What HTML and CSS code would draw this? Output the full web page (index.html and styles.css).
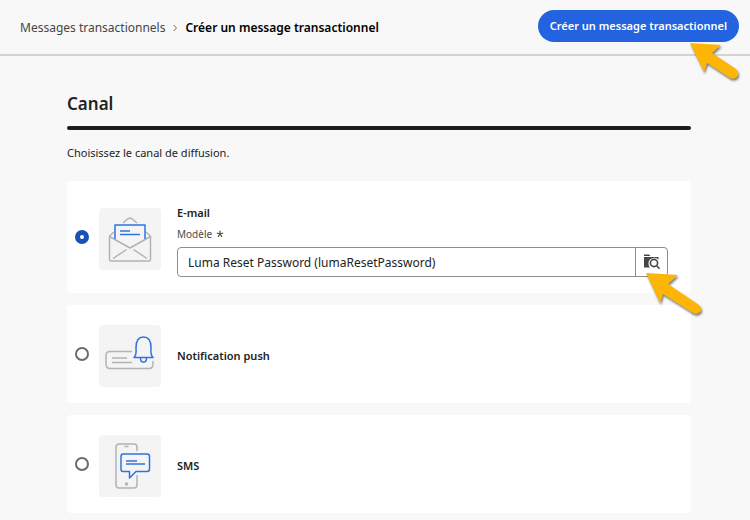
FILE: index.html
```html
<!DOCTYPE html>
<html lang="fr">
<head>
    <meta charset="UTF-8">
    <meta name="viewport" content="width=device-width, initial-scale=1.0">
    <title>Créer un message transactionnel</title>
    <link rel="stylesheet" href="styles.css">
</head>
<body>

<header class="topbar">
    <nav class="breadcrumb">
        <a href="#">Messages transactionnels</a>
        <svg class="chevron" viewBox="0 0 6 8" width="6" height="8"><path d="M1.5 1 L4.5 4 L1.5 7"/></svg>
        <span class="current">Créer un message transactionnel</span>
    </nav>
    <div class="create">
        <button type="button" class="create-button">Créer un message transactionnel</button>
        <svg class="arrow arrow-create" viewBox="0 0 60 48" width="60" height="48">
            <path d="M1 1 L32 3 L23 11 L47 27 Q51 31 48 35 Q45 38 41 36 L18 21 L15 30 Z"/>
        </svg>
    </div>
</header>

<main class="content">
    <h1>Canal</h1>
    <div class="rule"></div>
    <p class="intro">Choisissez le canal de diffusion.</p>

    <form class="channels">
        <div class="channel">
            <input type="radio" id="email" name="canal" checked>
            <div class="picture">
                <svg viewBox="0 0 62 62" width="62" height="62">
                    <g class="grey">
                        <path d="M24 15 L28 11.5 Q31 9 34 11.5 L38 15"/>
                        <path d="M15 24 L10.5 28 V51.5 Q10.5 53 12 53 H50 Q51.500 53 51.500 51.500 V28 L47 24"/>
                        <path d="M10.500 28.500 L31 40 L51.500 28.500 M14 50.500 L27.500 41.500 M48 50.500 L34.500 41.500"/>
                    </g>
                    <g class="blue">
                        <path d="M16 31 V17 H46 V31"/>
                        <path d="M21 23 H31 M21 26.500 H41"/>
                    </g>
                </svg>
            </div>
            <div class="details">
                <label class="name" for="email">E-mail</label>
                <label class="field-label" for="modele">Modèle
                    <svg class="required" viewBox="0 0 8 8" width="8" height="8"><path d="M4 4 V0.800 M4 4 L7.200 3 M4 4 L6 6.900 M4 4 L2 6.900 M4 4 L0.800 3"/></svg>
                </label>
                <div class="picker">
                    <input type="text" id="modele" value="Luma Reset Password (lumaResetPassword)">
                    <button type="button" class="browse" aria-label="Parcourir">
                        <svg viewBox="0 0 18 18" width="18" height="18">
                            <path class="folder" d="M1 1.500 H6 L7.500 3 H1 Z M1 4 H15.500 V6.500 A5.500 5.500 0 0 0 7 14.500 H1 Z"/>
                            <circle class="lens" cx="11" cy="10" r="3.600"/>
                            <path class="lens" d="M13.700 12.700 L16.500 15.800"/>
                        </svg>
                    </button>
                    <svg class="arrow arrow-browse" viewBox="0 0 66 52" width="66" height="52">
                        <path d="M1 1 L33 3 L23 12 L54 33 Q58 37 55 40 Q52 43 48 41 L18 22 L15 31 Z"/>
                    </svg>
                </div>
            </div>
        </div>

        <div class="channel">
            <input type="radio" id="push" name="canal">
            <div class="picture">
                <svg viewBox="0 0 62 62" width="62" height="62">
                    <g class="grey">
                        <path d="M33 26.500 H11 Q7 26.500 7 30.500 V39 Q7 43.500 11 43.500 H50 Q54 43.500 54 39 V36"/>
                        <path d="M13 33 H28 M13 37.500 H33"/>
                    </g>
                    <g class="blue">
                        <path d="M35 32.500 C38 29.500 37 26 37 22.500 C37 16 39 12 44.500 12 C50 12 52 16 52 22.500 C52 26 51 29.500 54 32.500 Z"/>
                        <path d="M41.500 33 C41.500 38.500 47.500 38.500 47.500 33"/>
                    </g>
                </svg>
            </div>
            <div class="details">
                <label class="name" for="push">Notification push</label>
            </div>
        </div>

        <div class="channel">
            <input type="radio" id="sms" name="canal">
            <div class="picture">
                <svg viewBox="0 0 62 62" width="62" height="62">
                    <g class="grey">
                        <path d="M38 16 V12 Q38 9 35 9 H20 Q17 9 17 12 V50 Q17 53 20 53 H35 Q38 53 38 50 V40"/>
                        <path d="M25.500 11.500 H29.500"/>
                        <circle cx="27.500" cy="49" r="1"/>
                    </g>
                    <g class="blue">
                        <path d="M24 19 H48 Q50.500 19 50.500 21.500 V34 Q50.500 36.500 48 36.500 H37 L30.500 43 V36.500 H24 Q22 36.500 22 34 V21.500 Q22 19 24 19 Z"/>
                        <path d="M27 26 H38 M27 29 H46"/>
                    </g>
                </svg>
            </div>
            <div class="details">
                <label class="name" for="sms">SMS</label>
            </div>
        </div>
    </form>
</main>

</body>
</html>
```
FILE: styles.css
```css
* {
    box-sizing: border-box;
}
body {
    font-family: "Noto Sans", sans-serif;
    font-size: 12px;
    background-color: #f8f8f8;
    color: #222;
    margin: 0;
}
.topbar {
    display: flex;
    justify-content: space-between;
    align-items: center;
    padding: 10px 11px 12px 20px;
    border-bottom: 2px solid #d3d3d3;
}
.breadcrumb {
    display: flex;
    align-items: center;
    gap: 7px;
    padding-top: 3px;
    line-height: 20px;
}
.breadcrumb a {
    color: #464646;
    text-decoration: none;
}
.chevron {
    fill: none;
    stroke: #6e6e6e;
}
.current {
    color: #000;
    font-weight: 600;
}
.create {
    position: relative;
}
.create-button {
    display: block;
    height: 32px;
    padding: 0 12px 2px;
    border: none;
    border-radius: 16px;
    background-color: #2363df;
    color: white;
    font-family: inherit;
    font-size: 11px;
    font-weight: 600;
    cursor: pointer;
}
.arrow {
    position: absolute;
    z-index: 1;
    fill: #fdb508;
    filter: drop-shadow(1px 2px 1px rgba(0, 0, 0, 0.5));
    pointer-events: none;
}
.arrow-create {
    top: 32px;
    right: -10px;
}
.arrow-browse {
    top: 24px;
    right: -44px;
}
.content {
    padding: 36px 59px 7px 67px;
}
h1 {
    margin: 0;
    font-size: 17px;
    font-weight: 600;
    line-height: 24px;
}
.rule {
    height: 4px;
    margin-top: 10px;
    border-radius: 2px;
    background-color: #1d1d1d;
}
.intro {
    margin: 13px 0 18px;
    font-size: 11px;
    line-height: 20px;
}
.channels {
    display: flex;
    flex-direction: column;
    gap: 12px;
}
.channel {
    display: flex;
    align-items: center;
    padding: 20px 23px 16px 8px;
    border-radius: 4px;
    background-color: white;
}
.channel input[type="radio"] {
    appearance: none;
    width: 14px;
    height: 14px;
    margin: 0 10px 5px 0;
    border: 2px solid #6b6b6b;
    border-radius: 50%;
    background-color: white;
}
.channel input[type="radio"]:checked {
    border: 5px solid #1b50b8;
}
.picture {
    width: 62px;
    height: 62px;
    margin-right: 16px;
    border-radius: 4px;
    background-color: #f4f4f4;
}
.picture svg {
    display: block;
    fill: none;
    stroke-width: 1.5;
    stroke-linejoin: round;
}
.grey {
    stroke: #b3b3b3;
}
.blue {
    stroke: #2c74dd;
}
.details {
    flex: 1;
}
.name {
    display: block;
    font-size: 11px;
    font-weight: 600;
    line-height: 24px;
}
.field-label {
    display: flex;
    align-items: center;
    gap: 4px;
    margin-bottom: 4px;
    color: #4b4b4b;
    font-size: 10px;
    line-height: 18px;
}
.required {
    stroke: #4b4b4b;
    stroke-width: 1.2;
}
.picker {
    position: relative;
    display: flex;
    height: 30px;
    border: 1px solid #8e8e8e;
    border-radius: 4px;
    background-color: white;
}
.picker input {
    flex: 1;
    min-width: 0;
    padding: 0 10px;
    border: none;
    background: none;
    color: #222;
    font-family: inherit;
    font-size: 12px;
}
.browse {
    display: flex;
    align-items: center;
    justify-content: center;
    width: 32px;
    padding: 0;
    border: none;
    border-left: 1px solid #8e8e8e;
    background: none;
    cursor: pointer;
}
.folder {
    fill: #464646;
}
.lens {
    fill: white;
    stroke: #464646;
    stroke-width: 1.6;
}
```
